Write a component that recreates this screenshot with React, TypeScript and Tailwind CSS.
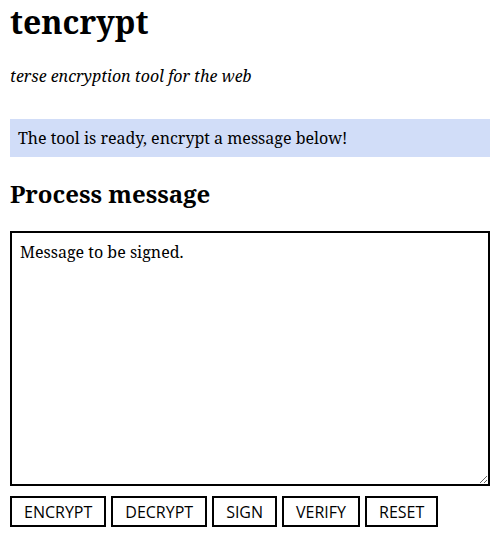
export default function App() {
  return (
    <div className="min-h-screen bg-white pl-[10px] pr-[4px] text-black [font-family:'Noto_Serif','DejaVu_Serif',serif]">
      <h1 className="m-0 text-[32px] font-bold leading-[43px]">tencrypt</h1>
      <p className="mt-[22px] text-[16px] italic leading-[22px]">terse encryption tool for the web</p>

      <div className="mt-[32px] bg-[#d1ddf8] px-[8px] py-[8px] text-[16px] leading-[22px]">
        The tool is ready, encrypt a message below!
      </div>

      <h2 className="mt-[20px] text-[24px] font-bold leading-[33px]">Process message</h2>

      <textarea
        className="mt-[21px] block h-[255px] w-full border-2 border-black px-[8px] pt-[8px] text-[16px] leading-[22px] outline-none [font-family:'Noto_Serif','DejaVu_Serif',serif]"
        defaultValue="Message to be signed."
      />

      <div className="mt-[10px] flex gap-[5px] [font-family:'Open_Sans','Noto_Sans',sans-serif]">
        {['ENCRYPT', 'DECRYPT', 'SIGN', 'VERIFY', 'RESET'].map((label) => (
          <button
            key={label}
            className="h-[31px] border-2 border-black bg-white px-[12px] text-[16px] leading-none"
          >
            {label}
          </button>
        ))}
      </div>
    </div>
  );
}
